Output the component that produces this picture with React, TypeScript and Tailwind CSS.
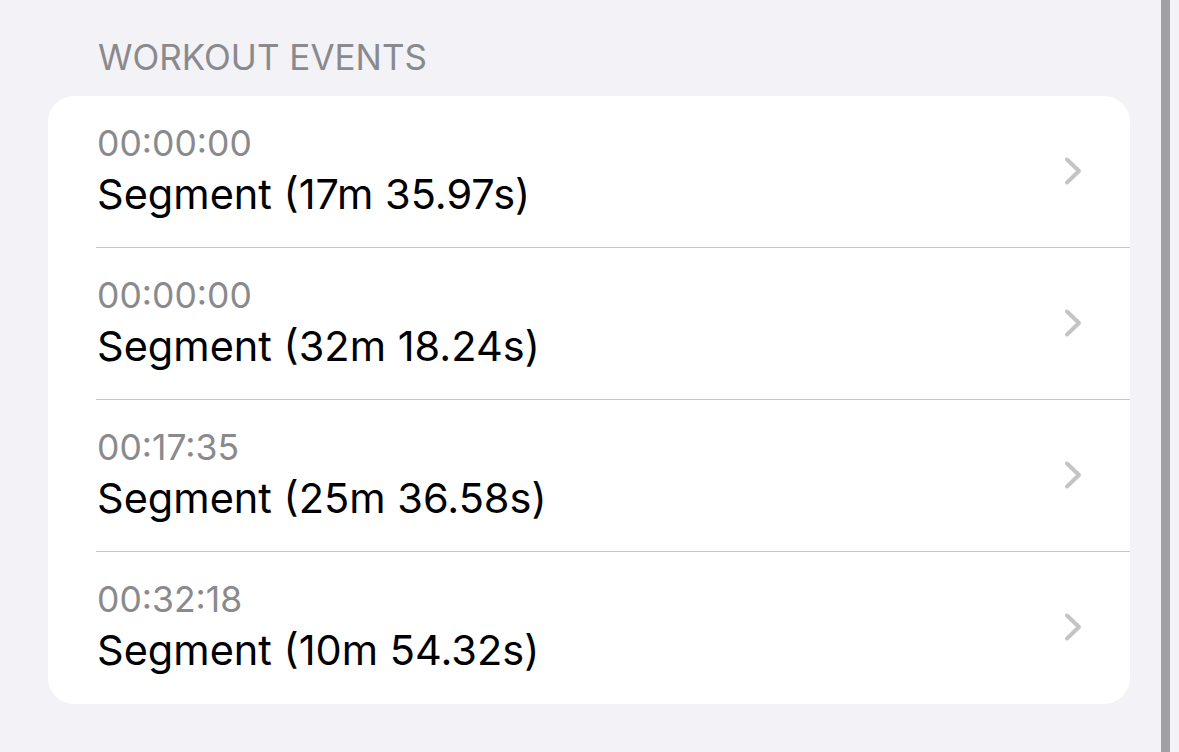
import React from 'react';

interface WorkoutEvent {
  time: string;
  label: string;
}

const EVENTS: WorkoutEvent[] = [
  { time: '00:00:00', label: 'Segment (17m 35.97s)' },
  { time: '00:00:00', label: 'Segment (32m 18.24s)' },
  { time: '00:17:35', label: 'Segment (25m 36.58s)' },
  { time: '00:32:18', label: 'Segment (10m 54.32s)' },
];

const Chevron = () => (
  <svg width="20" height="30" viewBox="0 0 20 30" fill="none" className="shrink-0">
    <path d="M4 3.5 L16 15 L4 26.5" stroke="#c4c4c7" strokeWidth="4" strokeLinecap="round" strokeLinejoin="round" />
  </svg>
);

const App: React.FC = () => {
  return (
    <div
      className="w-[1179px] h-[752px] bg-[#f2f2f7] flex overflow-hidden"
      style={{ fontFamily: 'Inter, "Noto Sans", sans-serif' }}
    >
      <div className="flex-1 pl-[48px] pr-[31px]">
        <div className="pl-[50px] pt-[37px] h-[96px] text-[35px] leading-[40px] text-[#8a8a8e]">
          WORKOUT EVENTS
        </div>

        {/* Event list card */}
        <div className="bg-white rounded-[26px] pl-[48px]">
          {EVENTS.map((ev, i) => (
            <div
              key={i}
              className={`flex h-[152px] pr-[48px] ${i < EVENTS.length - 1 ? 'border-b border-[#c6c6c8]' : ''}`}
            >
              <div className="flex-1 pl-[1px] pt-[28px]">
                <div className="text-[35.5px] leading-[40px] text-[#8a8a8e]">{ev.time}</div>
                <div className="mt-[6px] text-[41.5px] leading-[48px] text-black">{ev.label}</div>
              </div>
              <div className="pt-[60px] -mr-[1px]">
                <Chevron />
              </div>
            </div>
          ))}
        </div>
      </div>

      {/* scroll indicator */}
      <div className="w-[9px] bg-[#a0a0a5] mr-[9px]" />
    </div>
  );
};

export default App;
